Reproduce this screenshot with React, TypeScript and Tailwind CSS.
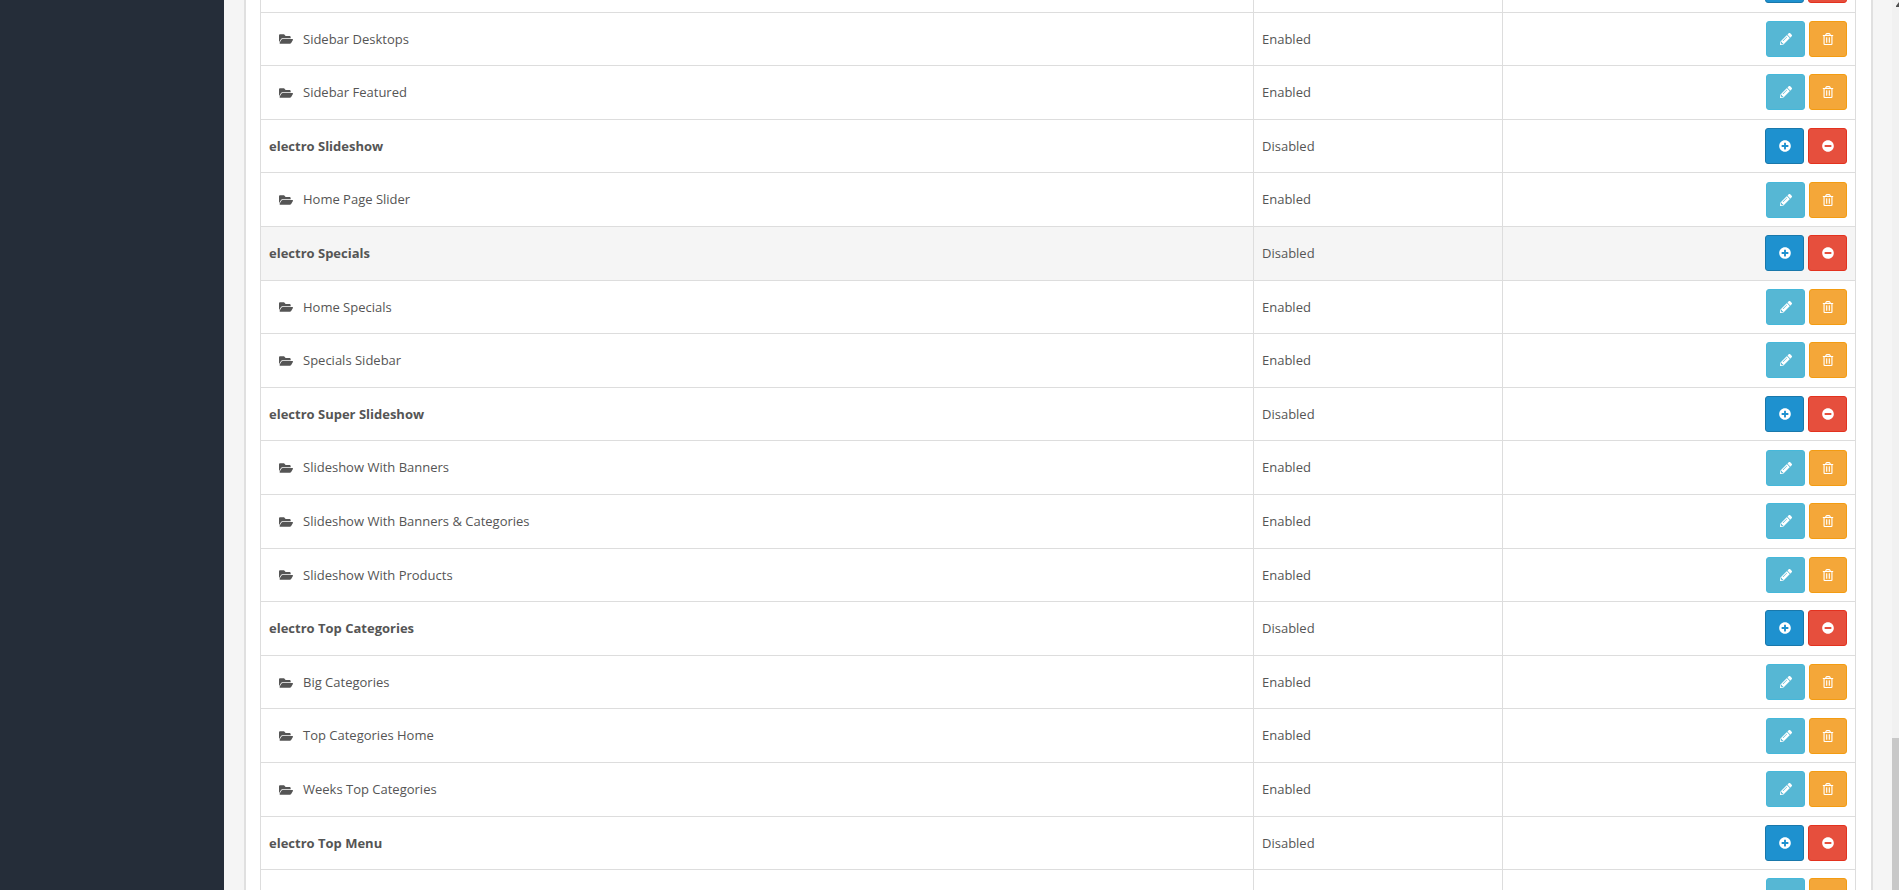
import React from "react";
import {
  FaFolderOpen,
  FaMinusCircle,
  FaPencilAlt,
  FaPlusCircle,
  FaRegTrashAlt,
} from "react-icons/fa";

type Row = { name: string; group?: boolean; hover?: boolean };

const rows: Row[] = [
  { name: "electro Sidebar", group: true },
  { name: "Sidebar Desktops" },
  { name: "Sidebar Featured" },
  { name: "electro Slideshow", group: true },
  { name: "Home Page Slider" },
  { name: "electro Specials", group: true, hover: true },
  { name: "Home Specials" },
  { name: "Specials Sidebar" },
  { name: "electro Super Slideshow", group: true },
  { name: "Slideshow With Banners" },
  { name: "Slideshow With Banners & Categories" },
  { name: "Slideshow With Products" },
  { name: "electro Top Categories", group: true },
  { name: "Big Categories" },
  { name: "Top Categories Home" },
  { name: "Weeks Top Categories" },
  { name: "electro Top Menu", group: true },
  { name: "Top Menu" },
];

function IconButton({ className, children }: { className: string; children: React.ReactNode }) {
  return (
    <button className={`flex h-[36px] items-center justify-center rounded-[3px] border text-[12px] text-white ${className}`}>
      {children}
    </button>
  );
}

export default function App() {
  return (
    <div className="flex h-[890px] overflow-hidden bg-[#f5f5f5] font-['Open_Sans',sans-serif] text-[13px] text-[#555]">
      <aside className="w-[224px] shrink-0 bg-[#252d39]" />
      <main className="min-w-0 flex-1 pl-[20px] pr-[26px]">
        <div className="-mt-[42px] border-x-2 border-[#e0e0e0] bg-white pl-[14px] pr-[15px]">
          <table className="w-full table-fixed border-collapse">
            <colgroup>
              <col />
              <col className="w-[249px]" />
              <col className="w-[353px]" />
            </colgroup>
            <tbody>
              {rows.map((row) => (
                <tr key={row.name} className={`h-[53.6px] ${row.hover ? "bg-[#f5f5f5]" : ""}`}>
                  <td className="border border-[#ddd] px-[8px] pt-[1px]">
                    {row.group ? (
                      <b className="font-bold">{row.name}</b>
                    ) : (
                      <span className="flex items-center pl-[10px]">
                        <FaFolderOpen className="mr-[10px] h-[14px] w-[14px] text-[#555]" />
                        {row.name}
                      </span>
                    )}
                  </td>
                  <td className="border border-[#ddd] px-[8px] pt-[1px]">{row.group ? "Disabled" : "Enabled"}</td>
                  <td className="border border-[#ddd] px-[8px]">
                    <div className="flex justify-end gap-[4px]">
                      {row.group ? (
                        <>
                          <IconButton className="w-[39px] border-[#1978ab] bg-[#1e91cf]">
                            <FaPlusCircle />
                          </IconButton>
                          <IconButton className="w-[39px] border-[#e3321f] bg-[#e64f3d]">
                            <FaMinusCircle />
                          </IconButton>
                        </>
                      ) : (
                        <>
                          <IconButton className="w-[39px] border-[#46b8da] bg-[#56b7d4]">
                            <FaPencilAlt />
                          </IconButton>
                          <IconButton className="w-[38px] border-[#f39c12] bg-[#f4a739]">
                            <FaRegTrashAlt />
                          </IconButton>
                        </>
                      )}
                    </div>
                  </td>
                </tr>
              ))}
            </tbody>
          </table>
        </div>
      </main>
      {/* browser scrollbar, sits over the page */}
      <div className="absolute right-0 top-0 h-[890px] w-[7px] bg-[#f1f1f1]">
        <svg className="absolute left-[4px] top-[2px]" width="3" height="5" viewBox="0 0 3 5">
          <path d="M3 0 L0 4 L0 5 L3 5 Z" fill="#505050" />
        </svg>
        <div className="absolute bottom-0 h-[152px] w-full bg-[#c8c8c8]" />
      </div>
    </div>
  );
}
